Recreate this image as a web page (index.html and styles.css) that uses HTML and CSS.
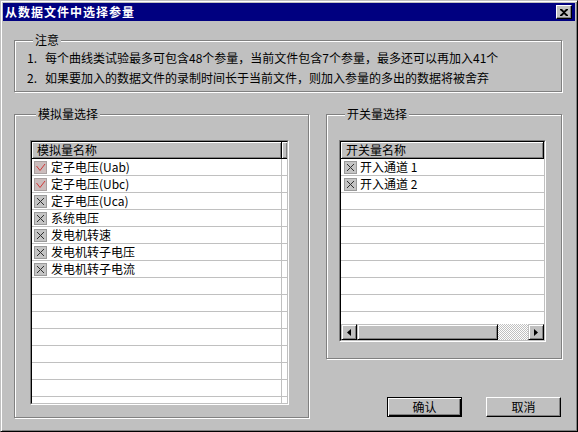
FILE: index.html
```html
<!DOCTYPE html>
<html lang="zh-CN">
<head>
    <meta charset="UTF-8">
    <title>从数据文件中选择参量</title>
    <link rel="stylesheet" href="styles.css">
</head>
<body>
<div class="window">
    <div class="titlebar">
        <span class="title">从数据文件中选择参量</span>
        <span class="close-btn">
            <svg width="8" height="7" viewBox="0 0 8 7"><path d="M0 0h2l2 2 2-2h2v1L5 3.5 8 6v1H6L4 5 2 7H0V6l3-2.5L0 1z" fill="#000"/></svg>
        </span>
    </div>

    <div class="group notes">
        <div class="group-title">注意</div>
        <p class="note first"><span class="num">1.</span>每个曲线类试验最多可包含48个参量，当前文件包含7个参量，最多还可以再加入41个</p>
        <p class="note"><span class="num">2.</span>如果要加入的数据文件的录制时间长于当前文件，则加入参量的多出的数据将被舍弃</p>
    </div>

    <div class="lower">
        <!-- analog list -->
        <div class="group analog">
            <div class="group-title">模拟量选择</div>
            <div class="list list-analog">
                <div class="list-inner">
                    <div class="list-head">
                        <div class="head-cell head-main">模拟量名称</div>
                        <div class="head-cell head-rest"></div>
                    </div>
                    <div class="list-body">
                        <div class="row"><div class="cell"><svg class="chk" viewBox="0 0 13 13"><rect x="0.5" y="0.5" width="12" height="12" fill="#cbbcbc" stroke="#a8a0a0"/><path d="M2.5 5l3.5 4.5L11 3" fill="none" stroke="#d03838"/></svg>定子电压(Uab)</div></div>
                        <div class="row"><div class="cell"><svg class="chk" viewBox="0 0 13 13"><rect x="0.5" y="0.5" width="12" height="12" fill="#cbbcbc" stroke="#a8a0a0"/><path d="M2.5 5l3.5 4.5L11 3" fill="none" stroke="#d03838"/></svg>定子电压(Ubc)</div></div>
                        <div class="row"><div class="cell"><svg class="chk" viewBox="0 0 13 13"><rect x="0.5" y="0.5" width="12" height="12" fill="#c4c4c4" stroke="#9a9a9a"/><path d="M3 3l7 7M10 3l-7 7" stroke="#303030"/></svg>定子电压(Uca)</div></div>
                        <div class="row"><div class="cell"><svg class="chk" viewBox="0 0 13 13"><rect x="0.5" y="0.5" width="12" height="12" fill="#c4c4c4" stroke="#9a9a9a"/><path d="M3 3l7 7M10 3l-7 7" stroke="#303030"/></svg>系统电压</div></div>
                        <div class="row"><div class="cell"><svg class="chk" viewBox="0 0 13 13"><rect x="0.5" y="0.5" width="12" height="12" fill="#c4c4c4" stroke="#9a9a9a"/><path d="M3 3l7 7M10 3l-7 7" stroke="#303030"/></svg>发电机转速</div></div>
                        <div class="row"><div class="cell"><svg class="chk" viewBox="0 0 13 13"><rect x="0.5" y="0.5" width="12" height="12" fill="#c4c4c4" stroke="#9a9a9a"/><path d="M3 3l7 7M10 3l-7 7" stroke="#303030"/></svg>发电机转子电压</div></div>
                        <div class="row"><div class="cell"><svg class="chk" viewBox="0 0 13 13"><rect x="0.5" y="0.5" width="12" height="12" fill="#c4c4c4" stroke="#9a9a9a"/><path d="M3 3l7 7M10 3l-7 7" stroke="#303030"/></svg>发电机转子电流</div></div>
                        <div class="row"><div class="cell"></div></div>
                        <div class="row"><div class="cell"></div></div>
                        <div class="row"><div class="cell"></div></div>
                        <div class="row"><div class="cell"></div></div>
                        <div class="row"><div class="cell"></div></div>
                        <div class="row"><div class="cell"></div></div>
                        <div class="row"><div class="cell"></div></div>
                        <div class="row"><div class="cell"></div></div>
                    </div>
                </div>
            </div>
        </div>

        <div class="right-col">
            <!-- switch list -->
            <div class="group switch">
                <div class="group-title">开关量选择</div>
                <div class="list list-switch">
                    <div class="list-inner">
                        <div class="list-head">
                            <div class="head-cell head-full">开关量名称</div>
                        </div>
                        <div class="list-body">
                            <div class="row"><div class="cell"><svg class="chk" viewBox="0 0 13 13"><rect x="0.5" y="0.5" width="12" height="12" fill="#c4c4c4" stroke="#9a9a9a"/><path d="M3 3l7 7M10 3l-7 7" stroke="#303030"/></svg>开入通道 1</div></div>
                            <div class="row"><div class="cell"><svg class="chk" viewBox="0 0 13 13"><rect x="0.5" y="0.5" width="12" height="12" fill="#c4c4c4" stroke="#9a9a9a"/><path d="M3 3l7 7M10 3l-7 7" stroke="#303030"/></svg>开入通道 2</div></div>
                            <div class="row"><div class="cell"></div></div>
                            <div class="row"><div class="cell"></div></div>
                            <div class="row"><div class="cell"></div></div>
                            <div class="row"><div class="cell"></div></div>
                            <div class="row"><div class="cell"></div></div>
                            <div class="row"><div class="cell"></div></div>
                            <div class="row"><div class="cell"></div></div>
                            <div class="row"><div class="cell"></div></div>
                        </div>
                        <div class="hscroll">
                            <div class="sb-btn"><svg width="4" height="7" viewBox="0 0 4 7"><path d="M4 0v7L0 3.5z" fill="#000"/></svg></div>
                            <div class="sb-thumb"></div>
                            <div class="sb-track"></div>
                            <div class="sb-btn"><svg width="4" height="7" viewBox="0 0 4 7"><path d="M0 0v7l4-3.5z" fill="#000"/></svg></div>
                        </div>
                    </div>
                </div>
            </div>

            <div class="buttons">
                <button class="btn btn-default">确认</button>
                <button class="btn">取消</button>
            </div>
        </div>
    </div>
</div>
</body>
</html>
```

FILE: styles.css
```css
* {
    box-sizing: border-box;
}
html, body {
    margin: 0;
    padding: 0;
}
body {
    font-family: "Noto Sans CJK SC", "Liberation Sans", sans-serif;
    font-size: 12px;
    color: #000;
    background: #c0c0c0;
}
.window {
    width: 578px;
    height: 432px;
    background: #c0c0c0;
    border: 1px solid;
    border-color: #c0c0c0 #000 #000 #c0c0c0;
    box-shadow: inset 1px 1px #fff, inset -1px -1px #808080;
    padding: 2px;
    overflow: hidden;
}
.titlebar {
    height: 18px;
    background: #000080;
    display: flex;
    align-items: center;
    justify-content: space-between;
    padding: 0 3px 0 2px;
}
.title {
    color: #fff;
    font-weight: bold;
    letter-spacing: 1px;
    line-height: 18px;
}
.close-btn {
    width: 16px;
    height: 14px;
    background: #c0c0c0;
    border: 1px solid;
    border-color: #fff #000 #000 #fff;
    box-shadow: inset -1px -1px #808080;
    display: flex;
    align-items: center;
    justify-content: center;
}

/* etched group boxes */
.group {
    border: 1px solid #808080;
    box-shadow: inset 1px 1px #fff, 1px 1px #fff;
}
.group-title {
    width: fit-content;
    height: 14px;
    line-height: 14px;
    margin: -8px 0 0 6px;
    padding: 0 2px;
    background: #c0c0c0;
}
.notes {
    width: 548px;
    margin: 19px 0 0 11px;
    padding: 0 0 3px 12px;
}
.note {
    margin: 0;
    line-height: 20px;
    white-space: nowrap;
}
.note.first {
    margin-top: 1px;
}
.num {
    display: inline-block;
    width: 18px;
}

.lower {
    display: flex;
    align-items: flex-start;
    gap: 17px;
    margin: 22px 0 0 11px;
}
.analog {
    width: 295px;
    height: 304px;
    padding-left: 15px;
}
.switch {
    width: 236px;
    height: 245px;
    padding-left: 12px;
}

/* list views */
.list {
    margin-top: 19px;
    border: 1px solid;
    border-color: #808080 #fff #fff #808080;
}
.list-analog {
    width: 259px;
    height: 265px;
}
.list-switch {
    width: 207px;
    height: 202px;
}
.list-inner {
    height: 100%;
    border: 1px solid;
    border-color: #000 #c0c0c0 #c0c0c0 #000;
    background: #fff;
    display: flex;
    flex-direction: column;
    overflow: hidden;
}
.list-head {
    display: flex;
    height: 17px;
    flex: none;
}
.head-cell {
    background: #c0c0c0;
    border-right: 1px solid #000;
    border-bottom: 1px solid #000;
    box-shadow: inset 1px 1px #fff, inset -1px -1px #808080;
    line-height: 15px;
    padding-left: 5px;
    white-space: nowrap;
}
.head-main {
    width: 250px;
}
.head-rest {
    flex: 1;
    border-right: 0;
}
.head-full {
    flex: 1;
}
.list-body {
    flex: 1;
    overflow: hidden;
}
.row {
    display: flex;
    height: 17px;
    border-bottom: 1px solid #c0c0c0;
}
.cell {
    display: flex;
    align-items: center;
    gap: 4px;
    padding-left: 2px;
    line-height: 16px;
    white-space: nowrap;
}
.list-analog .cell {
    width: 250px;
    border-right: 1px solid #c0c0c0;
}
.list-switch .cell {
    padding-left: 3px;
    gap: 3px;
}
.chk {
    width: 13px;
    height: 13px;
    flex: none;
}

/* horizontal scrollbar */
.hscroll {
    display: flex;
    height: 16px;
    flex: none;
}
.sb-btn, .sb-thumb {
    background: #c0c0c0;
    border: 1px solid;
    border-color: #c0c0c0 #000 #000 #c0c0c0;
    box-shadow: inset 1px 1px #fff, inset -1px -1px #808080;
}
.sb-btn {
    width: 16px;
    display: flex;
    align-items: center;
    justify-content: center;
}
.sb-thumb {
    width: 141px;
}
.sb-track {
    flex: 1;
    background: repeating-conic-gradient(#fff 0 25%, #c0c0c0 0 50%) 0 0 / 2px 2px;
}

/* dialog buttons */
.buttons {
    display: flex;
    justify-content: flex-end;
    gap: 24px;
    margin-top: 38px;
    padding-right: 1px;
}
.btn {
    width: 75px;
    height: 20px;
    padding: 0;
    font-family: inherit;
    font-size: 12px;
    color: #000;
    background: #c0c0c0;
    border: 1px solid;
    border-color: #fff #000 #000 #fff;
    box-shadow: inset -1px -1px #808080;
    line-height: 16px;
}
.btn-default {
    border-color: #000;
    box-shadow: inset 1px 1px #fff, inset -1px -1px #000, inset -2px -2px #808080;
}
```
